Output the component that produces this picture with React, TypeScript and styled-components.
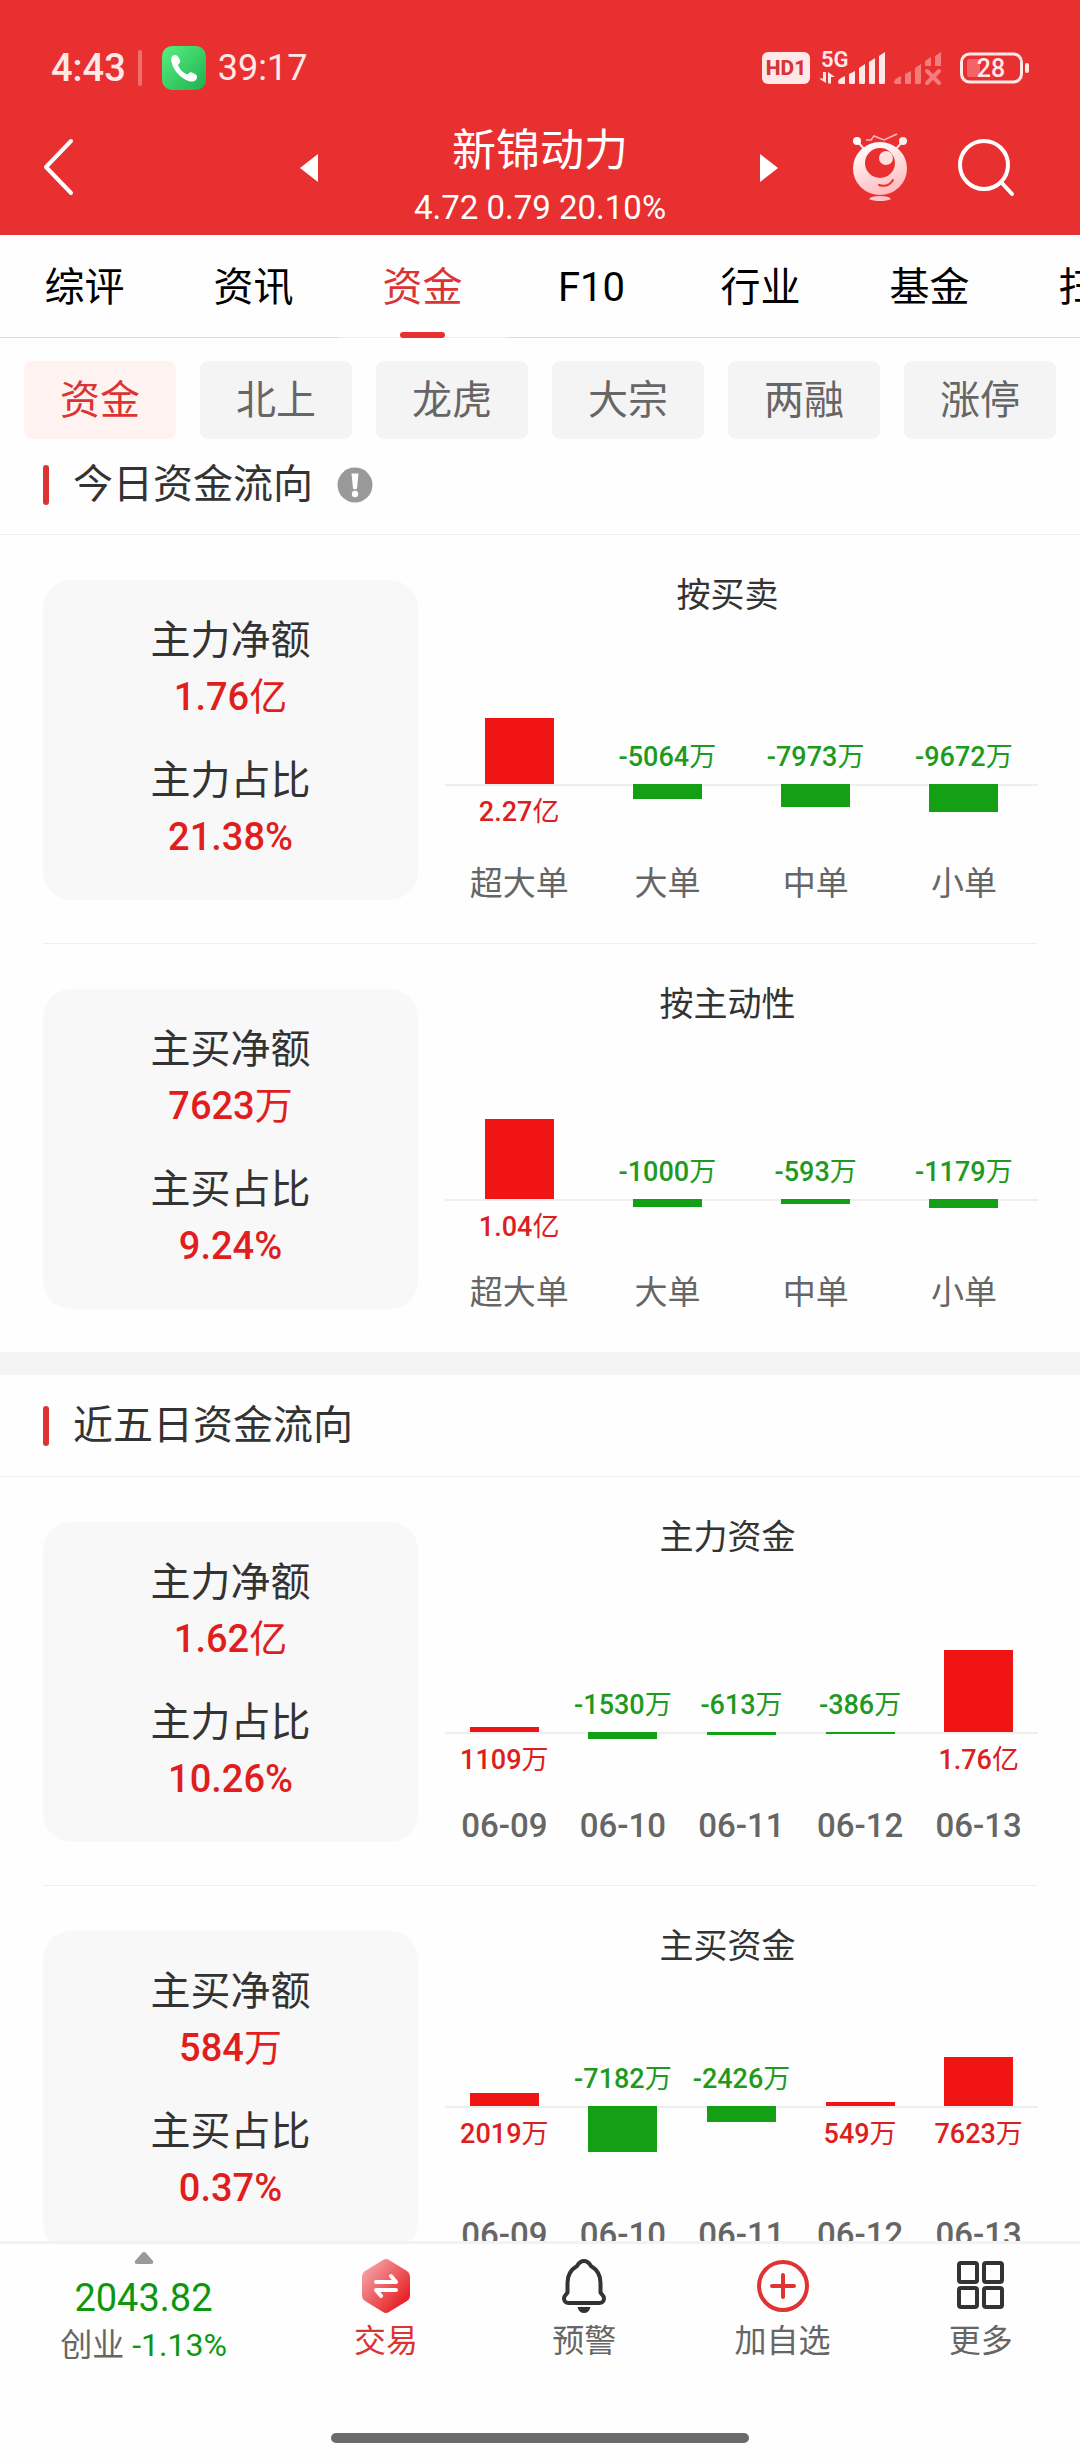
import React from "react";
import styled, { createGlobalStyle } from "styled-components";

const RED = "#e83030";
const UP = "#f01414";
const DOWN = "#14a014";

const GlobalStyle = createGlobalStyle`
  *, *::before, *::after { box-sizing: border-box; }
  body { margin: 0; background: #fefefe; font-family: Roboto, "Noto Sans CJK SC", sans-serif; color: #333; }
  h1, h2, h3, p, dl, dd, ul, figure { margin: 0; padding: 0; font-weight: 400; }
  ul { list-style: none; }
  button { margin: 0; padding: 0; border: 0; background: none; font: inherit; color: inherit; cursor: pointer; }
  svg { display: block; flex: none; overflow: visible; }
`;

const Screen = styled.div`
  display: flex;
  flex-direction: column;
  height: 100vh;
  background: #fefefe;
`;

/* ---------- header ---------- */
const Header = styled.header`
  flex: none;
  background: ${RED};
  color: #fff;
`;

const StatusBar = styled.div`
  display: flex;
  align-items: center;
  justify-content: space-between;
  padding: 36px 50px 0 51px;
  height: 100px;
  color: #ffe8e8;
`;

const StatusGroup = styled.div<{ $gap: number }>`
  display: flex;
  align-items: center;
  gap: ${(p) => p.$gap}px;
`;

const Clock = styled.span`
  font-size: 38px;
  font-weight: 500;
  line-height: 44px;
`;

const CallTime = styled.span`
  font-size: 36px;
  line-height: 44px;
`;

const StatusDivider = styled.span`
  width: 4px;
  height: 36px;
  margin-right: 8px;
  border-radius: 2px;
  background: rgba(255, 255, 255, 0.3);
`;

const HdBadge = styled.span`
  width: 48px;
  height: 32px;
  border-radius: 6px;
  background: #ffe8e8;
  color: #d83434;
  font-size: 21px;
  font-weight: 800;
  line-height: 33px;
  text-align: center;
`;

const BatteryBox = styled.span`
  margin-left: 9px;
`;

const TitleRow = styled.div`
  display: grid;
  grid-template-columns: 1fr 480px 1fr;
  align-items: center;
  min-height: 135px;
`;

const StockSwitch = styled.div`
  display: flex;
  align-items: center;
  justify-content: space-between;
  align-self: stretch;
`;

const Stock = styled.div`
  align-self: flex-end;
  text-align: center;
`;

const StockName = styled.h1`
  font-size: 44px;
  line-height: 60px;
`;

const StockQuote = styled.p`
  font-size: 33px;
  line-height: 54px;
`;

const BackButton = styled.button`
  justify-self: start;
  margin-left: 42px;
`;

const HeaderActions = styled.div`
  display: flex;
  align-items: center;
  justify-content: flex-end;
  gap: 50px;
  padding-right: 64px;
`;

/* ---------- tabs ---------- */
const Tabs = styled.nav`
  flex: none;
  display: flex;
  overflow: hidden;
`;

const Tab = styled.button<{ $active?: boolean }>`
  position: relative;
  flex: 0 0 169px;
  height: 103px;
  padding-top: 3px;
  border-bottom: 1px solid ${(p) => (p.$active ? "#eee" : "#dcdcdc")};
  font-size: 40px;
  line-height: 56px;
  color: ${(p) => (p.$active ? "#dc3434" : "#000")};
  white-space: nowrap;
  &::after {
    content: "";
    display: ${(p) => (p.$active ? "block" : "none")};
    position: absolute;
    left: 62px;
    right: 62px;
    bottom: -1px;
    height: 6px;
    border-radius: 3px;
    background: ${RED};
  }
`;

const Chips = styled.div`
  flex: none;
  display: flex;
  gap: 24px;
  padding: 23px 24px 0;
`;

const Chip = styled.button<{ $active?: boolean }>`
  flex: 1;
  height: 78px;
  padding-top: 2px;
  border-radius: 8px;
  font-size: 40px;
  line-height: 56px;
  background: ${(p) => (p.$active ? "#fff3f2" : "#f4f4f4")};
  color: ${(p) => (p.$active ? "#dc3434" : "#666")};
`;

/* ---------- content ---------- */
const Content = styled.main`
  flex: 1;
  min-height: 0;
  overflow-y: auto;
  scrollbar-width: none;
`;

const Section = styled.section`
  & + & {
    border-top: 23px solid #f4f4f4;
  }
`;

const SectionHead = styled.div<{ $tight?: boolean }>`
  display: flex;
  align-items: center;
  height: ${(p) => (p.$tight ? 96 : 102)}px;
  padding: 0 43px ${(p) => (p.$tight ? 4 : 0)}px;
  border-bottom: 1px solid #eee;
  &::before {
    content: "";
    width: 6px;
    height: 40px;
    margin-right: 24px;
    border-radius: 3px;
    background: #dc3434;
  }
`;

const SectionTitle = styled.h2`
  font-size: 40px;
  line-height: 56px;
  margin-right: 24px;
`;

const Panel = styled.article`
  display: flex;
  margin: 0 43px;
  padding: 45px 0 43px;
  & + & {
    border-top: 1px solid #eee;
  }
`;

const Summary = styled.dl`
  display: flex;
  flex-direction: column;
  justify-content: center;
  gap: 28px;
  width: 375px;
  height: 320px;
  padding-bottom: 2px;
  border-radius: 28px;
  background: #f8f8f8;
  text-align: center;
`;

const Term = styled.dt`
  font-size: 40px;
  line-height: 56px;
`;

const Amount = styled.dd`
  font-size: 38px;
  font-weight: 500;
  line-height: 56px;
  color: #e01e1e;
`;

const Unit = styled.span`
  font-weight: 400;
`;

const Chart = styled.figure`
  flex: 1;
  display: flex;
  flex-direction: column;
`;

const ChartTitle = styled.figcaption`
  font-size: 34px;
  line-height: 30px;
  text-align: center;
`;

const Columns = styled.ul`
  flex: 1;
  display: flex;
  margin: 0 -1px 0 27px;
`;

const Column = styled.li`
  flex: 1 1 0;
  min-width: 0;
  display: flex;
  flex-direction: column;
  align-items: stretch;
`;

const Above = styled.div`
  display: flex;
  flex-direction: column;
  align-items: center;
  justify-content: flex-end;
`;

const Below = styled.div`
  flex: 1;
  display: flex;
  flex-direction: column;
  align-items: center;
  box-shadow: inset 0 2px #eee;
`;

const Bar = styled.div<{ $up: boolean }>`
  width: 69px;
  background: ${(p) => (p.$up ? UP : DOWN)};
`;

const BarValue = styled.span<{ $up: boolean }>`
  margin: 11px 0 10px;
  font-size: 27px;
  font-weight: 500;
  line-height: 34px;
  white-space: nowrap;
  color: ${(p) => (p.$up ? "#dc2020" : "#1e9a1e")};
`;

const ColumnName = styled.span<{ $numeric: boolean }>`
  font-size: 33px;
  font-weight: ${(p) => (p.$numeric ? 500 : 400)};
  line-height: 32px;
  text-align: center;
  white-space: nowrap;
  color: #666;
`;

/* ---------- bottom bar ---------- */
const BottomBar = styled.footer`
  flex: none;
  border-top: 3px solid #f2f2f2;
  background: #fefefe;
`;

const Actions = styled.div`
  display: flex;
  height: 189px;
`;

const IndexQuote = styled.button`
  flex: 0 0 287px;
  display: flex;
  flex-direction: column;
  align-items: center;
  padding-top: 8px;
`;

const IndexValue = styled.span`
  margin-top: 8px;
  font-size: 38px;
  line-height: 52px;
  color: #0f960f;
`;

const IndexChange = styled.span`
  font-size: 32px;
  line-height: 42px;
  color: #666;
  white-space: nowrap;
  b {
    font-weight: 400;
    color: #0f960f;
  }
`;

const Action = styled.button<{ $accent?: boolean }>`
  flex: 1;
  display: flex;
  flex-direction: column;
  align-items: center;
  gap: 5px;
  padding-top: 14px;
  font-size: 32px;
  line-height: 44px;
  color: ${(p) => (p.$accent ? "#dc3434" : "#666")};
`;

const HomeIndicator = styled.div`
  width: 418px;
  height: 10px;
  margin: 0 auto 17px;
  border-radius: 5px;
  background: #6a6a6a;
`;

/* ---------- icons ---------- */
const PhoneIcon = () => (
  <svg width="44" height="44" viewBox="0 0 44 44">
    <defs>
      <linearGradient id="call" x1="0" y1="0" x2="1" y2="1">
        <stop offset="0" stopColor="#58f080" />
        <stop offset="1" stopColor="#20b050" />
      </linearGradient>
    </defs>
    <rect width="44" height="44" rx="10" fill="url(#call)" />
    <path d="M10.500 9.800c1.800-1.300 4.300-1 5.600 1l1.800 2.700c.9 1.600.3 3.200-1 4.200-.9.700-1 1.300-.5 2.300 1.600 3.500 4.300 6.300 7.700 8 1 .5 1.700.4 2.400-.4 1.200-1.400 2.900-1.600 4.400-.7l2.900 1.700c1.500 1.100 1.600 2.700.7 4.300-1.600 2.700-4.700 3.200-8 2C18.500 32 12.300 25.500 9.800 17c-.9-2.900-1.200-5.500.7-7.200z" fill="#fff" />
  </svg>
);

const Signal5G = () => (
  <svg width="66" height="36" viewBox="0 0 66 36" fill="#ffe8e8">
    <text x="2" y="17" fontSize="22" fontWeight="600" fontFamily="Roboto, sans-serif">5G</text>
    <path d="M4 22h3v11L0 28.500h4zM9 33.500V22l7 5h-4v6.500z" />
    <path d="M19 32q0-3 7-6v8h-5q-2 0-2-2zM30 24l6-3v11.500q0 1.500-1.500 1.500H31.500q-1.500 0-1.500-1.500zM40 18l6-4v18.500q0 1.500-1.500 1.500H41.500q-1.500 0-1.500-1.500zM50 12l6-4v24.500q0 1.500-1.500 1.500H51.500q-1.500 0-1.500-1.500zM60 6l6-4v30.500q0 1.500-1.500 1.500H61.500q-1.500 0-1.500-1.500z" />
  </svg>
);

const SignalOff = () => (
  <svg width="48" height="36" viewBox="0 0 48 36" fill="#f47c7c">
    <path d="M0 32q0-3 7-6v8H2q-2 0-2-2zM11 24l6-3v11.500q0 1.500-1.500 1.500h-3q-1.500 0-1.500-1.500zM21 18l6-4v18.500q0 1.500-1.500 1.500h-3q-1.500 0-1.500-1.500zM31 11l6-4v9h-6zM41 6l6-4v14h-6z" />
    <path d="M33 21l12 12M45 21l-12 12" stroke="#f47c7c" strokeWidth="4" strokeLinecap="round" />
  </svg>
);

const BatteryIcon = () => (
  <svg width="70" height="32" viewBox="0 0 70 32">
    <rect x="1.500" y="2" width="60" height="28" rx="8" fill="none" stroke="#ffe8e8" strokeWidth="3" />
    <path d="M10 7h10v18H10q-3 0-3-3V10q0-3 3-3z" fill="#f26468" />
    <rect x="65" y="11" width="4" height="10" rx="2" fill="#ffe8e8" />
    <text x="31" y="25" textAnchor="middle" fontSize="25" fontWeight="500" fontFamily="Roboto, sans-serif" fill="#ffe8e8">28</text>
  </svg>
);

const BackIcon = () => (
  <svg width="34" height="60" viewBox="0 0 34 60" fill="none" stroke="#fff" strokeWidth="4" strokeLinecap="round" strokeLinejoin="round">
    <path d="M29 3L4 29l25 26" />
  </svg>
);

const ArrowIcon = ({ right }: { right?: boolean }) => (
  <svg width="20" height="30" viewBox="0 0 20 30" fill="#fff">
    <path d={right ? "M0 1l18 14L0 29z" : "M18 1L0 15l18 14z"} />
  </svg>
);

const RobotIcon = () => (
  <svg width="56" height="70" viewBox="0 0 56 70">
    <defs>
      <linearGradient id="robot" x1="0.3" y1="0" x2="0.7" y2="1">
        <stop offset="0" stopColor="#fff" />
        <stop offset="1" stopColor="#ffb8bc" />
      </linearGradient>
    </defs>
    <path d="M5 8l8 9M51 8l-8 9" stroke="#ffe4e4" strokeWidth="2" />
    <circle cx="5" cy="8" r="4" fill="#fff" />
    <circle cx="51" cy="8" r="4" fill="#ffecec" />
    <path d="M14 7h5l3-4 10 4L45 1" fill="none" stroke="#ffb8b8" strokeWidth="1.500" />
    <ellipse cx="28" cy="35.500" rx="27" ry="26.500" fill="url(#robot)" />
    <circle cx="28" cy="30" r="15" fill={RED} />
    <circle cx="34" cy="25" r="7" fill="#ffdede" />
    <path d="M27 52c6 2 11 0 14-5" fill="none" stroke={RED} strokeWidth="2" strokeLinecap="round" />
    <path d="M17 66q2-3 11-3t11 3q-4 2-11 2t-11-2z" fill="#ffc4c8" />
  </svg>
);

const SearchIcon = () => (
  <svg width="58" height="58" viewBox="0 0 58 58" fill="none" stroke="#fff" strokeWidth="4" strokeLinecap="round">
    <circle cx="26" cy="26" r="24" />
    <path d="M43 43l11 12" />
  </svg>
);

const InfoIcon = () => (
  <svg width="36" height="36" viewBox="0 0 36 36">
    <circle cx="18" cy="18" r="17.500" fill="#999" />
    <path d="M14.500 6.500h7l-1.500 15q-2 2-4 0z" fill="#fefefe" />
    <circle cx="18" cy="27" r="3.200" fill="#fefefe" />
  </svg>
);

const CaretIcon = () => (
  <svg width="20" height="12" viewBox="0 0 20 12" fill="#999">
    <path d="M10 0q1 0 2 1l7 8q1 3-2 3H3q-3 0-2-3l7-8q1-1 2-1z" />
  </svg>
);

const TradeIcon = () => (
  <svg width="56" height="56" viewBox="0 0 56 56">
    <defs>
      <linearGradient id="trade" x1="0.1" y1="0.1" x2="0.9" y2="0.9">
        <stop offset="0" stopColor="#f4a4a8" />
        <stop offset="0.9" stopColor="#e82428" />
      </linearGradient>
    </defs>
    <path d="M25 2q3-2 6 0l18 11q3 2 3 5v20q0 3-3 5L31 54q-3 2-6 0L7 43q-3-2-3-5V18q0-3 3-5z" fill="url(#trade)" />
    <path d="M18 24h20l-5-6M38 32H18l5 6" fill="none" stroke="#fff" strokeWidth="4" strokeLinecap="round" strokeLinejoin="round" />
  </svg>
);

const BellIcon = () => (
  <svg width="56" height="56" viewBox="0 0 56 56">
    <path d="M28 3c-4 0-5.500 2.500-7 5-6 3.500-9.500 9-9.500 17v9.500c-1.500 2.500-3.500 3-3.500 6 0 3 2 4.500 4.500 4.500h31c2.500 0 4.500-1.500 4.500-4.500 0-3-2-3.500-3.500-6V25c0-8-3.500-13.500-9.500-17-1.500-2.500-3-5-7-5z" fill="none" stroke="#333" strokeWidth="4" strokeLinejoin="round" />
    <path d="M21.500 49h13q-1.500 6-6.500 6t-6.500-6z" fill="#333" />
  </svg>
);

const AddIcon = () => (
  <svg width="56" height="56" viewBox="0 0 56 56" fill="none" stroke="#e03434" strokeWidth="4" strokeLinecap="round">
    <circle cx="28" cy="28" r="24" />
    <path d="M28 17v22M17 28h22" />
  </svg>
);

const MoreIcon = () => (
  <svg width="56" height="56" viewBox="0 0 56 56" fill="none" stroke="#333" strokeWidth="4">
    <rect x="6" y="5" width="18" height="19" rx="2" />
    <rect x="31" y="5" width="18" height="19" rx="2" />
    <rect x="6" y="30" width="18" height="19" rx="2" />
    <rect x="31" y="30" width="18" height="19" rx="2" />
  </svg>
);

/* ---------- data ---------- */
type Point = { name: string; label: string; value: number };
type Flow = {
  terms: [string, string][];
  title: string;
  /** distance from the chart title to the zero line */
  rise: number;
  /** pixels drawn for the largest bar */
  peak: number;
  points: Point[];
};

const today: Flow[] = [
  {
    terms: [["主力净额", "1.76亿"], ["主力占比", "21.38%"]],
    title: "按买卖",
    rise: 174,
    peak: 66,
    points: [
      { name: "超大单", label: "2.27亿", value: 22700 },
      { name: "大单", label: "-5064万", value: -5064 },
      { name: "中单", label: "-7973万", value: -7973 },
      { name: "小单", label: "-9672万", value: -9672 },
    ],
  },
  {
    terms: [["主买净额", "7623万"], ["主买占比", "9.24%"]],
    title: "按主动性",
    rise: 180,
    peak: 80,
    points: [
      { name: "超大单", label: "1.04亿", value: 10400 },
      { name: "大单", label: "-1000万", value: -1000 },
      { name: "中单", label: "-593万", value: -593 },
      { name: "小单", label: "-1179万", value: -1179 },
    ],
  },
];

const fiveDays: Flow[] = [
  {
    terms: [["主力净额", "1.62亿"], ["主力占比", "10.26%"]],
    title: "主力资金",
    rise: 180,
    peak: 82,
    points: [
      { name: "06-09", label: "1109万", value: 1109 },
      { name: "06-10", label: "-1530万", value: -1530 },
      { name: "06-11", label: "-613万", value: -613 },
      { name: "06-12", label: "-386万", value: -386 },
      { name: "06-13", label: "1.76亿", value: 17600 },
    ],
  },
  {
    terms: [["主买净额", "584万"], ["主买占比", "0.37%"]],
    title: "主买资金",
    rise: 145,
    peak: 49,
    points: [
      { name: "06-09", label: "2019万", value: 2019 },
      { name: "06-10", label: "-7182万", value: -7182 },
      { name: "06-11", label: "-2426万", value: -2426 },
      { name: "06-12", label: "549万", value: 549 },
      { name: "06-13", label: "7623万", value: 7623 },
    ],
  },
];

/** A figure whose trailing 万 or 亿 is set in the regular weight. */
const Money = ({ text }: { text: string }) => {
  const unit = text.match(/[万亿]$/)?.[0];
  return unit ? <>{text.slice(0, -1)}<Unit>{unit}</Unit></> : <>{text}</>;
};

const FlowPanel = ({ flow }: { flow: Flow }) => {
  const max = Math.max(...flow.points.map((p) => Math.abs(p.value)));
  return (
    <Panel>
      <Summary>
        {flow.terms.map(([term, amount]) => (
          <div key={term}>
            <Term>{term}</Term>
            <Amount><Money text={amount} /></Amount>
          </div>
        ))}
      </Summary>
      <Chart>
        <ChartTitle>{flow.title}</ChartTitle>
        <Columns>
          {flow.points.map((p) => {
            const up = p.value > 0;
            const height = Math.round((Math.abs(p.value) / max) * flow.peak);
            const bar = <Bar $up={up} style={{ height }} />;
            const value = <BarValue $up={up}><Money text={p.label} /></BarValue>;
            return (
              <Column key={p.name}>
                <Above style={{ height: flow.rise }}>{up ? bar : value}</Above>
                <Below>{up ? value : bar}</Below>
                <ColumnName $numeric={/^\d/.test(p.name)}>{p.name}</ColumnName>
              </Column>
            );
          })}
        </Columns>
      </Chart>
    </Panel>
  );
};

const tabs = ["综评", "资讯", "资金", "F10", "行业", "基金", "扫雷"];
const chips = ["资金", "北上", "龙虎", "大宗", "两融", "涨停"];

export default function App() {
  return (
    <>
      <GlobalStyle />
      <Screen>
        <Header>
          <StatusBar>
            <StatusGroup $gap={12}>
              <Clock>4:43</Clock>
              <StatusDivider />
              <PhoneIcon />
              <CallTime>39:17</CallTime>
            </StatusGroup>
            <StatusGroup $gap={9}>
              <HdBadge>HD1</HdBadge>
              <Signal5G />
              <SignalOff />
              <BatteryBox><BatteryIcon /></BatteryBox>
            </StatusGroup>
          </StatusBar>
          <TitleRow>
            <BackButton aria-label="返回"><BackIcon /></BackButton>
            <StockSwitch>
              <button aria-label="上一只"><ArrowIcon /></button>
              <Stock>
                <StockName>新锦动力</StockName>
                <StockQuote>4.72 0.79 20.10%</StockQuote>
              </Stock>
              <button aria-label="下一只"><ArrowIcon right /></button>
            </StockSwitch>
            <HeaderActions>
              <button aria-label="助手"><RobotIcon /></button>
              <button aria-label="搜索"><SearchIcon /></button>
            </HeaderActions>
          </TitleRow>
        </Header>
        <Tabs>
          {tabs.map((t, i) => (
            <Tab key={t} $active={i === 2}>{t}</Tab>
          ))}
        </Tabs>
        <Chips>
          {chips.map((c, i) => (
            <Chip key={c} $active={i === 0}>{c}</Chip>
          ))}
        </Chips>
        <Content>
          <Section>
            <SectionHead $tight>
              <SectionTitle>今日资金流向</SectionTitle>
              <button aria-label="说明"><InfoIcon /></button>
            </SectionHead>
            {today.map((f) => <FlowPanel key={f.title} flow={f} />)}
          </Section>
          <Section>
            <SectionHead>
              <SectionTitle>近五日资金流向</SectionTitle>
            </SectionHead>
            {fiveDays.map((f) => <FlowPanel key={f.title} flow={f} />)}
          </Section>
        </Content>
        <BottomBar>
          <Actions>
            <IndexQuote>
              <CaretIcon />
              <IndexValue>2043.82</IndexValue>
              <IndexChange>创业 <b>-1.13%</b></IndexChange>
            </IndexQuote>
            <Action $accent><TradeIcon />交易</Action>
            <Action><BellIcon />预警</Action>
            <Action><AddIcon />加自选</Action>
            <Action><MoreIcon />更多</Action>
          </Actions>
          <HomeIndicator />
        </BottomBar>
      </Screen>
    </>
  );
}
